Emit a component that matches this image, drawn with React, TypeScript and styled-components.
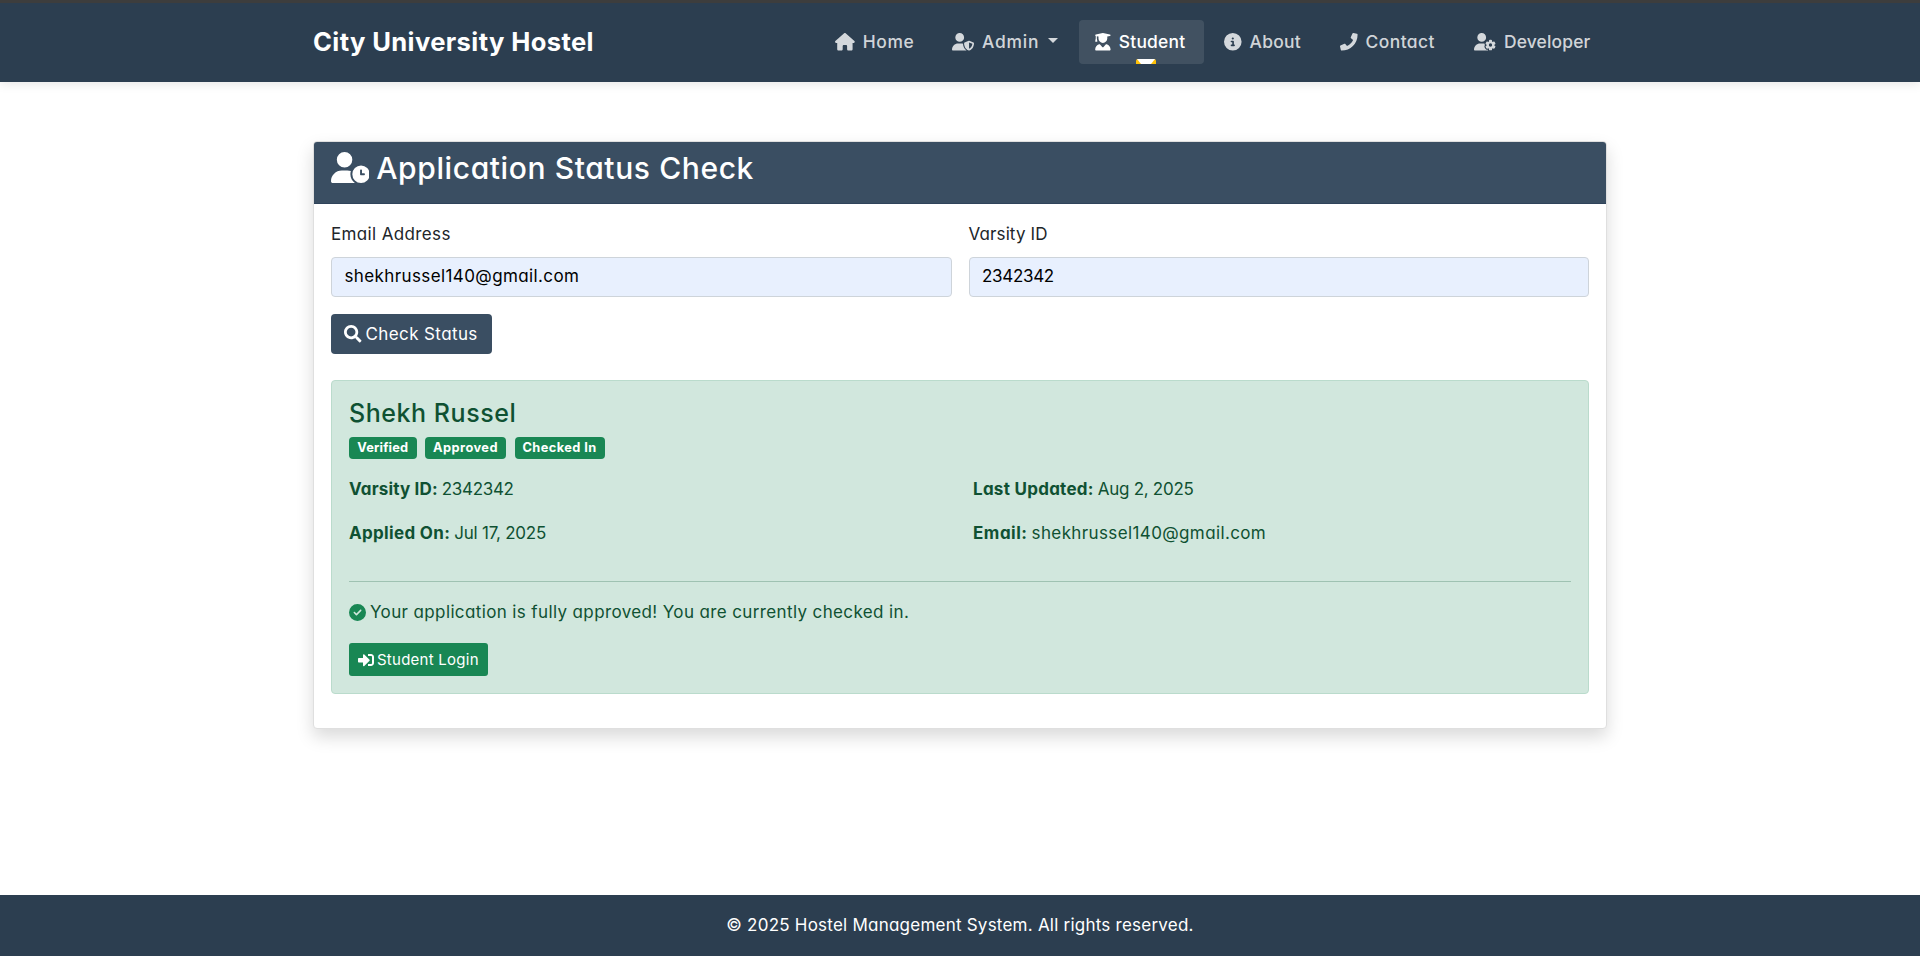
import React from "react";
import styled, { createGlobalStyle } from "styled-components";
import {
  FaHouse,
  FaUserShield,
  FaUserGraduate,
  FaCircleInfo,
  FaUserGear,
  FaUserClock,
  FaCircleCheck,
} from "react-icons/fa6";
import { FaPhone, FaSearch, FaSignInAlt } from "react-icons/fa";

const GlobalStyle = createGlobalStyle`
  *, *::before, *::after { box-sizing: border-box; }
  body {
    margin: 0;
    background: #fff;
    color: #212529;
    font-family: Inter, "Open Sans", sans-serif;
    font-feature-settings: "cv11";
    font-size: 17px;
    line-height: 27px;
  }
`;

const Page = styled.div`
  display: flex;
  flex-direction: column;
  min-height: 956px;
`;

const Container = styled.div`
  width: 1294px;
  margin: 0 auto;
`;

/* Letter-spaced text run */
const Text = styled.span<{ $ls?: number }>`
  letter-spacing: ${(p) => p.$ls ?? 0}px;
  white-space: nowrap;
`;

const Navbar = styled.header`
  height: 82px;
  border-top: 3px solid #3d3d3d;
  background: #2c3e50;
  box-shadow: 0 2px 10px rgba(0, 0, 0, 0.1);
`;

const NavInner = styled(Container)`
  display: flex;
  align-items: center;
  justify-content: space-between;
  height: 78px;
`;

const Brand = styled.a`
  color: #fff;
  font-size: 25.6px;
  font-weight: 700;
  line-height: 44px;
`;

const NavList = styled.nav`
  display: flex;
  gap: 4px;
`;

const NavLink = styled.a<{ $width: number; $icon: number; $active?: boolean }>`
  position: relative;
  display: flex;
  align-items: center;
  flex: none;
  width: ${(p) => p.$width}px;
  height: 44px;
  padding-left: 16px;
  border-radius: 4px;
  overflow: hidden;
  font-size: 17.4px;
  line-height: 26px;
  font-weight: 500;
  color: ${(p) => (p.$active ? "#fff" : "rgba(255, 255, 255, 0.8)")};
  background: ${(p) => (p.$active ? "rgba(255, 255, 255, 0.1)" : "transparent")};

  svg {
    flex: none;
    width: ${(p) => p.$icon}px;
    height: 17.6px;
    margin-right: 8px;
  }

  span {
    margin-bottom: 1px;
  }
`;

const Caret = styled.i`
  margin-left: 9px;
  margin-top: -3px;
  border-top: 5px solid currentColor;
  border-left: 5px solid transparent;
  border-right: 5px solid transparent;
`;

const Underline = styled.i`
  position: absolute;
  left: 57px;
  bottom: 0;
  width: 20px;
  height: 5px;
  border-radius: 2px 2px 0 0;
  background: #ffc107;

  &::after {
    content: "";
    display: block;
    height: 5px;
    background: #fff;
    clip-path: polygon(1px 0, 19px 0, 15px 100%, 5px 100%);
  }
`;

const Main = styled.main`
  flex: 1;
  padding-top: 59px;
`;

const Card = styled(Container)`
  border: 1px solid #dfdfdf;
  border-radius: 4px;
  background: #fff;
  box-shadow: 0 8px 17px rgba(0, 0, 0, 0.15);
`;

const CardHeader = styled.div`
  display: flex;
  align-items: flex-start;
  height: 62px;
  padding: 8px 16.5px 0;
  border-bottom: 1px solid #2f435a;
  border-radius: 3px 3px 0 0;
  background: #3a4e62;
  color: #fff;

  svg {
    flex: none;
    width: 38.75px;
    height: 31px;
    margin: 2px 7px 0 0;
  }
`;

const Title = styled.h2`
  margin: 0;
  font-size: 30px;
  font-weight: 500;
  line-height: 37px;
`;

const CardBody = styled.div`
  padding: 17px;
`;

const Fields = styled.form`
  display: grid;
  grid-template-columns: 1fr 1fr;
  gap: 17px;
  margin-bottom: 26px;
`;

const Field = styled.label`
  display: flex;
  flex-direction: column;
  gap: 9px;
`;

const FieldValue = styled.div`
  height: 40px;
  padding: 0 12.5px;
  border: 1px solid #ced4da;
  border-radius: 4px;
  background: #e8f0fe;
  color: #000;
  line-height: 37px;
`;

const Button = styled.button<{ $small?: boolean }>`
  display: flex;
  align-items: center;
  gap: ${(p) => (p.$small ? 3 : 4)}px;
  width: ${(p) => (p.$small ? 139 : 161)}px;
  height: ${(p) => (p.$small ? 33 : 40)}px;
  padding: 0 0 0 ${(p) => (p.$small ? 9 : 13)}px;
  border: 0;
  border-radius: ${(p) => (p.$small ? 3 : 4)}px;
  background: ${(p) => (p.$small ? "#198754" : "#3a4e62")};
  color: #fff;
  font: inherit;
  font-feature-settings: inherit;
  font-size: ${(p) => (p.$small ? 15 : 17)}px;

  svg {
    flex: none;
    width: ${(p) => (p.$small ? 16 : 17.5)}px;
    height: ${(p) => (p.$small ? 16 : 17.5)}px;
  }
`;

const Alert = styled.section`
  padding: 17px;
  margin-bottom: 17px;
  border: 1px solid #badbcc;
  border-radius: 4px;
  background: #d1e7dd;
  color: #0f5132;
`;

const Name = styled.h4`
  margin: 0 0 8px;
  font-size: 25px;
  font-weight: 500;
  line-height: 31px;
`;

const Badges = styled.div`
  display: flex;
  gap: 8.5px;
  margin-bottom: 17px;
`;

const Badge = styled.span<{ $width: number }>`
  width: ${(p) => p.$width}px;
  height: 22px;
  border-radius: 4px;
  background: #198754;
  color: #fff;
  font-size: 12.8px;
  font-weight: 700;
  line-height: 21px;
  text-align: center;
`;

const Details = styled.div`
  display: grid;
  grid-template-columns: 624px 1fr;
  row-gap: 17px;
`;

const Detail = styled.div`
  display: flex;
  gap: 4px;
`;

const Rule = styled.hr`
  height: 1px;
  margin: 34px 0 17px;
  border: 0;
  background: #9fc2b2;
`;

const Message = styled.p`
  display: flex;
  align-items: center;
  gap: 4px;
  margin: 0 0 17px;

  svg {
    width: 17px;
    height: 17px;
    color: #198754;
  }
`;

const Footer = styled.footer`
  padding: 17px 0;
  background: #2c3e50;
  color: #fff;
  text-align: center;
`;

const Strong = styled(Text)`
  font-weight: 700;
`;

const navItems = [
  { label: "Home", icon: FaHouse, size: 19.8, width: 113, ls: 0.6 },
  { label: "Admin", icon: FaUserShield, size: 22, width: 139, ls: 0.78, caret: true },
  { label: "Student", icon: FaUserGraduate, size: 15.75, width: 125, ls: 0.25, active: true },
  { label: "About", icon: FaCircleInfo, size: 17.6, width: 112, ls: 0.25 },
  { label: "Contact", icon: FaPhone, size: 17.6, width: 130, ls: 0.45 },
  { label: "Developer", icon: FaUserGear, size: 22, width: 149, ls: 0.17 },
];

const details = [
  { label: "Varsity ID:", ls: 0.16, value: "2342342", valueLs: -0.31 },
  { label: "Last Updated:", ls: 0.27, value: "Aug 2, 2025", valueLs: -0.28 },
  { label: "Applied On:", ls: 0.33, value: "Jul 17, 2025", valueLs: -0.22 },
  { label: "Email:", ls: 0.52, value: "shekhrussel140@gmail.com", valueLs: 0.38 },
];

export default function App() {
  return (
    <>
      <GlobalStyle />
      <Page>
        <Navbar>
          <NavInner>
            <Brand>
              <Text $ls={0.38}>City University Hostel</Text>
            </Brand>
            <NavList>
              {navItems.map(({ label, icon: Icon, size, width, ls, caret, active }) => (
                <NavLink key={label} $width={width} $icon={size} $active={active}>
                  <Icon />
                  <Text $ls={ls}>{label}</Text>
                  {caret && <Caret />}
                  {active && <Underline />}
                </NavLink>
              ))}
            </NavList>
          </NavInner>
        </Navbar>

        <Main>
          <Card>
            <CardHeader>
              <FaUserClock />
              <Title>
                <Text $ls={0.6}>Application Status Check</Text>
              </Title>
            </CardHeader>
            <CardBody>
              <Fields>
                <Field>
                  <Text $ls={0.36}>Email Address</Text>
                  <FieldValue>
                    <Text $ls={0.39}>shekhrussel140@gmail.com</Text>
                  </FieldValue>
                </Field>
                <Field>
                  <Text $ls={0.12}>Varsity ID</Text>
                  <FieldValue>
                    <Text $ls={-0.31}>2342342</Text>
                  </FieldValue>
                </Field>
                <Button type="button">
                  <FaSearch />
                  <Text $ls={0.39}>Check Status</Text>
                </Button>
              </Fields>

              <Alert>
                <Name>
                  <Text $ls={0.55}>Shekh Russel</Text>
                </Name>
                <Badges>
                  <Badge $width={67.5}>
                    <Text $ls={0.19}>Verified</Text>
                  </Badge>
                  <Badge $width={81}>
                    <Text $ls={0.44}>Approved</Text>
                  </Badge>
                  <Badge $width={90}>
                    <Text $ls={0.42}>Checked In</Text>
                  </Badge>
                </Badges>
                <Details>
                  {details.map((d) => (
                    <Detail key={d.label}>
                      <Strong $ls={d.ls}>{d.label}</Strong>
                      <Text $ls={d.valueLs}>{d.value}</Text>
                    </Detail>
                  ))}
                </Details>
                <Rule />
                <Message>
                  <FaCircleCheck />
                  <Text $ls={0.375}>
                    Your application is fully approved! You are currently checked in.
                  </Text>
                </Message>
                <Button type="button" $small>
                  <FaSignInAlt />
                  <Text $ls={0.25}>Student Login</Text>
                </Button>
              </Alert>
            </CardBody>
          </Card>
        </Main>

        <Footer>
          <Text $ls={0.23}>© 2025 Hostel Management System. All rights reserved.</Text>
        </Footer>
      </Page>
    </>
  );
}
